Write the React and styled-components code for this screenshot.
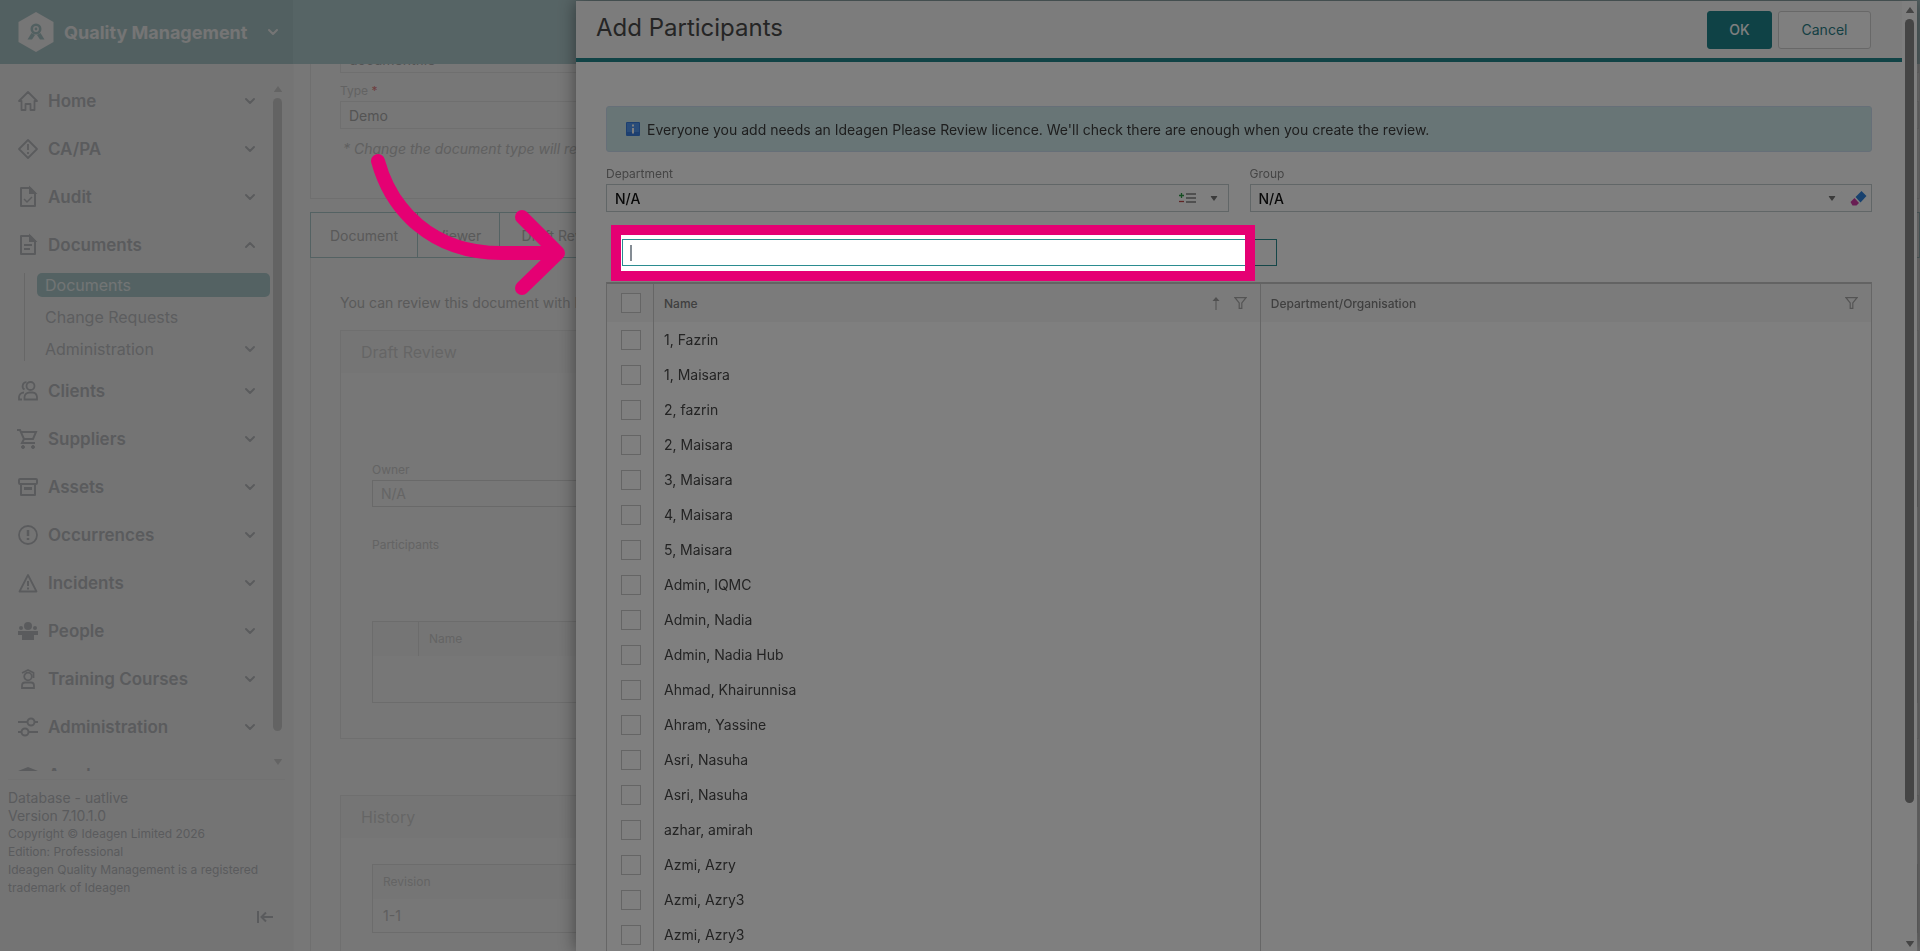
import React from 'react';
import styled, { createGlobalStyle, css } from 'styled-components';
import { ChevronDown, ChevronUp } from 'lucide-react';

const Global = createGlobalStyle`
  * { box-sizing: border-box; }
  html, body, #root { height: 100%; margin: 0; }
  body { overflow: hidden; font-family: Inter, "Liberation Sans", sans-serif; font-size: 14px; color: #444; background: #eeeeee; }
  button, input, select { font-family: inherit; }
  h1, h2, p, ul { margin: 0; padding: 0; font-weight: 400; }
`;

/* ---------- shell ---------- */
const Shell = styled.div`
  display: grid;
  grid-template-columns: 293px 1fr;
  grid-template-rows: 64px 1fr;
  height: 100vh;
`;
const Brand = styled.header`
  display: flex;
  align-items: center;
  gap: 10px;
  padding: 0 12px 0 18px;
  background: #a5c1c2;
  color: #eaeaea;
`;
const BrandName = styled.span`
  flex: 1;
  font-size: 18px;
  font-weight: 700;
  white-space: nowrap;
`;
const TopBar = styled.div`
  background: #adc8ca;
`;
const Sidebar = styled.aside`
  display: flex;
  flex-direction: column;
  min-height: 0;
  padding-right: 8px;
  background: #e9e9e9;
  color: #b5b7bb;
`;
const NavArea = styled.nav`
  flex: 1;
  min-height: 0;
  display: flex;
  margin-bottom: 8px;
`;
const NavList = styled.ul`
  flex: 1;
  overflow: hidden;
  padding-top: 13px;
  list-style: none;
`;
const NavButton = styled.button`
  display: flex;
  align-items: center;
  gap: 10px;
  width: 100%;
  height: 48px;
  padding: 0 12px 0 18px;
  border: 0;
  background: none;
  color: inherit;
  font-size: 17px;
  font-weight: 600;
  text-align: left;
  span { flex: 1; }
`;
const SubList = styled.ul`
  display: flex;
  flex-direction: column;
  gap: 8px;
  margin: 4px 0 6px 24px;
  padding-left: 12px;
  border-left: 1px solid #cfcfcf;
  list-style: none;
`;
const SubLink = styled.a`
  display: flex;
  align-items: center;
  justify-content: space-between;
  height: 24px;
  padding: 0 12px 0 8px;
  border-radius: 5px;
  font-size: 16px;
  text-decoration: none;
  color: ${(p) => (p.$active ? '#e4eaea' : '#b9bbbe')};
  background: ${(p) => (p.$active ? '#a9c5c7' : 'none')};
`;
const About = styled.footer`
  margin-left: 8px;
  padding: 9px 0 0;
  border-top: 1px solid #e2e2e2;
  line-height: 18px;
  font-size: 12px;
  height: 172px;
  display: flex;
  flex-direction: column;
`;
const AboutStrong = styled.p`
  font-size: 14px;
`;
const Collapse = styled.button`
  align-self: flex-end;
  margin: 11px 11px 0 0;
  padding: 0;
  height: 20px;
  border: 0;
  background: none;
  color: inherit;
`;
const ScrollTrack = styled.div`
  display: flex;
  flex-direction: column;
  align-items: center;
  width: 15px;
  padding: ${(p) => p.$pad};
`;
const Thumb = styled.div`
  width: 9px;
  flex: ${(p) => p.$share} 1 0;
  border-radius: 5px;
  margin-top: 6px;
  background: ${(p) => p.$color};
`;
const TrackRest = styled.div`
  flex: ${(p) => p.$share} 1 0;
`;

/* ---------- document page ---------- */
const Page = styled.main`
  min-width: 0;
  min-height: 0;
  overflow: hidden;
  padding-left: 16px;
  color: #bdbdbd;
  border-left: 1px solid #ebebeb;
`;
const Panel = styled.section`
  display: flow-root;
  border: 1px solid #dfdfdf;
  border-top: 0;
  padding-left: 29px;
  height: ${(p) => p.$h};
`;
const ScrolledField = styled.div`
  margin: -19px 0 8px;
`;
const PageField = styled.input`
  display: block;
  width: 100%;
  height: ${(p) => p.$h || '28px'};
  padding: 0 8px;
  border: 1px solid ${(p) => p.$line || '#dedede'};
  background: none;
  font-size: 14px;
  color: ${(p) => p.$ink || '#a9a9a9'};
`;
const PageLabel = styled.label`
  display: block;
  height: 20px;
  line-height: 20px;
  font-size: 12px;
  color: ${(p) => p.$ink || '#c6c6c6'};
  i { color: #dd8080; font-style: normal; }
`;
const Hint = styled.p`
  padding-left: 3px;
  margin-top: 10px;
  line-height: 20px;
  font-style: italic;
  white-space: nowrap;
  color: #c0c0c0;
`;
const Tabs = styled.div`
  display: flex;
  height: 46px;
  margin-top: 13px;
  border: 1px solid #a9c5c7;
`;
const Tab = styled.button`
  padding: 0 16px;
  min-width: ${(p) => p.$w};
  border: 0;
  border-right: 1px solid #a9c5c7;
  background: none;
  font-size: 14px;
  color: #b3b3b3;
  white-space: nowrap;
`;
const Intro = styled.p`
  padding: 35px 0 17px;
  line-height: 20px;
  color: #b5b5b5;
  white-space: nowrap;
`;
const Card = styled.section`
  border: 1px solid #dfdfdf;
  height: ${(p) => p.$h};
  margin-bottom: 56px;
`;
const CardTitle = styled.h2`
  height: 42px;
  line-height: 42px;
  padding-left: 20px;
  font-size: 16px;
  background: #ebebeb;
  color: #cbcbcb;
`;
const CardBody = styled.div`
  padding: ${(p) => p.$top} 0 0 31px;
`;
const MiniTable = styled.table`
  width: 100%;
  border: 1px solid #d9d9d9;
  border-collapse: collapse;
  font-size: 12px;
  text-align: left;
  th { height: 34px; font-weight: 400; padding: 0 10px; background: #ebebeb; color: #c8c8c8; }
  th + th { border-left: 1px solid #d9d9d9; }
  td { padding: 0 10px; font-size: 14px; }
`;
const HeadCell = styled.th`
  width: ${(p) => p.$w};
`;
const BodyCell = styled.td`
  height: ${(p) => p.$h};
`;

/* ---------- drawer ---------- */
const Drawer = styled.div`
  position: fixed;
  top: 1px;
  bottom: 0;
  left: 30%;
  right: 3px;
  display: flex;
  background: #fff;
  box-shadow: 0 0 16px rgba(0, 0, 0, 0.45);
`;
const DrawerMain = styled.div`
  flex: 1;
  min-width: 0;
  display: flex;
  flex-direction: column;
`;
const DrawerHead = styled.header`
  display: flex;
  align-items: center;
  gap: 6px;
  height: 61px;
  flex: none;
  padding: 0 31px 0 20px;
  background: #f8f8f8;
  border-bottom: 4px solid #22868c;
`;
const Title = styled.h1`
  flex: 1;
  padding-bottom: 4px;
  font-size: 24px;
  color: #4b4b4b;
  line-height: 34px;
`;
const Action = styled.button`
  height: 38px;
  width: ${(p) => (p.$primary ? '65px' : '93px')};
  border-radius: 3px;
  font-size: 14px;
  ${(p) =>
    p.$primary
      ? css`background: #1f858c; border: 1px solid #1f858c; color: #fff; font-weight: 500;`
      : css`background: #fff; border: 1px solid #d0d0d0; color: #2b8087;`}
`;
const DrawerBody = styled.div`
  flex: 1;
  min-height: 0;
  display: flex;
  flex-direction: column;
  padding: 44px 30px 0;
`;
const Notice = styled.div`
  display: flex;
  align-items: center;
  gap: 7px;
  height: 46px;
  flex: none;
  padding: 0 19px;
  border: 1px solid #ccdff0;
  border-radius: 3px;
  background: #d0ebed;
  color: #3c3c3c;
`;
const Filters = styled.div`
  display: grid;
  grid-template-columns: 1fr 1fr;
  gap: 21px;
  margin-top: 12px;
`;
const FilterLabel = styled.label`
  display: block;
  height: 20px;
  line-height: 20px;
  font-size: 12px;
  color: #8a8a8a;
`;
const SelectBox = styled.div`
  display: flex;
  align-items: center;
  gap: 14px;
  height: 28px;
  padding: 0 ${(p) => p.$end} 0 8px;
  border: 1px solid #c3cccf;
`;
const Select = styled.select`
  flex: 1;
  appearance: none;
  border: 0;
  background: none;
  padding: 0;
  font-size: 14px;
  font-weight: 500;
  color: #111;
`;
const Search = styled.div`
  position: relative;
  flex: none;
  width: 53%;
  margin: 27px 0 16px;
  padding-left: 16px;
`;
const SearchInput = styled.input`
  display: block;
  width: 100%;
  height: 27px;
  padding: 0 8px;
  border: 1px solid #2b8c90;
  background: #fff;
  font-size: 14px;
  outline: none;
`;
const Spotlight = styled.div`
  position: absolute;
  z-index: 3;
  top: -14px;
  left: 5px;
  right: 22px;
  height: 56px;
  border: 10px solid #e50073;
  box-shadow: 0 0 0 3000px rgba(0, 0, 0, 0.5);
  pointer-events: none;
`;
const Caret = styled.span`
  position: absolute;
  left: 24px;
  top: 6px;
  width: 2px;
  height: 16px;
  background: #848c94;
`;
const Arrow = styled.svg`
  position: absolute;
  z-index: 4;
  left: -235px;
  top: -85px;
  overflow: visible;
  pointer-events: none;
`;
const GridWrap = styled.div`
  flex: 1;
  min-height: 0;
  overflow: hidden;
`;
const Grid = styled.table`
  width: 100%;
  table-layout: fixed;
  border-collapse: separate;
  border-spacing: 0;
  border: 1px solid #cdcdcd;
  border-top: 2px solid #c6c6c6;
  th, td { padding: 0; text-align: left; }
  th + th, td + td { border-left: 1px solid #cdcdcd; padding: 0 13px 0 10px; }
`;
const GridHead = styled.th`
  height: 38px;
  width: ${(p) => p.$w};
  background: #f6f6f6;
  font-size: 12px;
  font-weight: 500;
  color: #808080;
`;
const HeadInner = styled.div`
  display: flex;
  align-items: center;
  gap: 14px;
  span { flex: 1; }
`;
const PersonCell = styled.td`
  height: 35px;
  color: #484848;
`;
const Check = styled.input`
  display: block;
  appearance: none;
  width: 20px;
  height: 20px;
  margin: 0 0 0 14px;
  border: 1px solid #cacaca;
  background: #fff;
`;

/* ---------- icons ---------- */
const Svg = ({ children, size = 20, ...rest }) => (
  <svg width={size} height={size} viewBox="0 0 20 20" fill="none" stroke="currentColor" strokeWidth="2" overflow="visible" {...rest}>
    {children}
  </svg>
);
const icons = {
  home: <Svg strokeWidth="1.800"><path d="M1 10 10 1l9 9h-2.500v9h-4v-6h-5v6h-4v-9z" strokeLinejoin="round" /></Svg>,
  capa: <Svg strokeWidth="1.800"><path d="M10 1 19 10 10 19 1 10z" strokeLinejoin="round" /><path d="M10 5v6M10 13v2" /></Svg>,
  audit: <Svg><path d="M3 1h9l5 5v13H3z" strokeLinejoin="round" /><path d="M12 1v5h5z" fill="currentColor" /><path d="m6 12 3 3 5-5" strokeWidth="1.500" /></Svg>,
  docs: <Svg><path d="M3 1h9l5 5v13H3z" strokeLinejoin="round" /><path d="M12 1v5h5z" fill="currentColor" /><path d="M6 10h8M6 14h6" /></Svg>,
  clients: <Svg strokeWidth="1.800"><circle cx="12.500" cy="5" r="4" /><path d="M8.500 1.200a4 4 0 0 0-2 7.400M6.500 18.500v-2.500a5 5 0 0 1 5-4.500h3a5 5 0 0 1 4.500 4.500v2.500zM6 11.500a5 5 0 0 0-5 4.500v2.500h3" /></Svg>,
  cart: <Svg><path d="M-1 1h3l4 9-2 4h13M3 3h15l-3 7H6" /><circle cx="5" cy="18" r="1.500" fill="currentColor" strokeWidth="1" /><circle cx="15" cy="18" r="1.500" fill="currentColor" strokeWidth="1" /></Svg>,
  assets: <Svg><rect x="1" y="2" width="18" height="5" rx="1" /><path d="M3 7v11h14V7" strokeLinejoin="round" /><path d="M6 11.500h8" strokeWidth="3" /></Svg>,
  occur: <Svg strokeWidth="1.800"><circle cx="10" cy="10" r="9" /><path d="M10 5v6M10 13v2" strokeWidth="2.500" /></Svg>,
  incident: <Svg><path d="M10 2 18.500 18.500H1.500z" strokeWidth="1.800" strokeLinejoin="round" /><path d="M10 8v5M10 14.500v2" /></Svg>,
  people: <Svg stroke="none" fill="currentColor"><circle cx="10" cy="5" r="4" /><circle cx="3" cy="7" r="2" /><circle cx="17" cy="7" r="2" /><path d="M0 10h20v4h-4v5H4v-5H0z" /></Svg>,
  training: <Svg strokeWidth="1.800"><path d="M4 4 10 1l6 3M15.500 3.500V9" /><circle cx="10" cy="7.500" r="3.800" /><path d="M4 19v-2.500a3 3 0 0 1 3-3h6a3 3 0 0 1 3 3V19z" /></Svg>,
  admin: <Svg><path d="M0 5h9M17 5h3M0 15h3M11 15h9" /><circle cx="13" cy="5" r="3.500" /><circle cx="7" cy="15" r="3.500" /></Svg>,
  cap: <Svg stroke="none" fill="currentColor"><path d="M10 2 20 6l-10 4L0 6z" /><path d="M4 9v5q6 4 12 0V9l-6 3z" /></Svg>,
};
const Logo = () => (
  <svg width="36" height="40" viewBox="0 0 36 40">
    <path d="M18 0 35.500 10v20L18 40 .5 30V10z" fill="#ececec" />
    <circle cx="18" cy="17" r="4.200" fill="none" stroke="#a5c1c2" strokeWidth="2.600" />
    <circle cx="18" cy="17" r="1.400" fill="#a5c1c2" />
    <path d="m13.500 21-4 6.500h4.500l3-4.500zM22.500 21l4 6.500H22L19 23z" fill="#a5c1c2" />
  </svg>
);
const Tri = ({ up, color, w = 8, h = 6 }) => (
  <svg width={w} height={h} viewBox="0 0 8 6" fill={color}>
    <path d={up ? 'M4 0 8 5.500Q8 6 7.500 6h-7Q0 6 0 5.500z' : 'M4 6 8 .5Q8 0 7.500 0h-7Q0 0 0 .5z'} />
  </svg>
);
const SortUp = () => (
  <svg width="8" height="13" viewBox="0 0 8 13" fill="#a0a0a0">
    <path d="M4 0 7.500 4h-3v9h-1V4H.5z" />
  </svg>
);
const Funnel = () => (
  <svg width="13" height="12" viewBox="0 0 13 12" fill="none" stroke="#a8a8a8" strokeWidth="1.200">
    <path d="M1 .7h11L7.800 6v5.300H5.200V6z" />
  </svg>
);
const Info = () => (
  <svg width="14" height="14" viewBox="0 0 14 14">
    <rect width="14" height="14" rx="1" fill="#3a7fe0" />
    <rect x="1" y="1" width="12" height="9" fill="#5299f2" />
    <path d="M7 2.500v2M7 6v5.500" stroke="#fff" strokeWidth="2" />
  </svg>
);
const ListIcon = () => (
  <svg width="17" height="12" viewBox="0 0 17 12" strokeWidth="2" fill="none">
    <path d="M7 2h10M7 6h10M7 10h10" stroke="#a0a0a0" />
    <path d="M0 3.500h5M2.500 1v5" stroke="#2b9a45" strokeWidth="1.300" />
    <path d="M0 9.500h5" stroke="#c04a4a" strokeWidth="1.300" />
  </svg>
);
const Eraser = () => (
  <svg width="17" height="15" viewBox="0 0 17 15">
    <path d="m11.500 0 5 5-6 6.500-5-5.500z" fill="#3183dc" />
    <path d="m4.500 7 4.500 5-2.500 2.500h-4L.5 11z" fill="#d23ba6" />
  </svg>
);

const Chevron = ({ up, color }) =>
  up ? <ChevronUp size={16} strokeWidth={3} color={color} /> : <ChevronDown size={16} strokeWidth={3} color={color} />;

const NavItem = ({ icon, label, open, children }) => (
  <li>
    <NavButton aria-expanded={!!open}>
      {icons[icon]}
      <span>{label}</span>
      <Chevron up={open} />
    </NavButton>
    {children}
  </li>
);

const people = [
  '1, Fazrin', '1, Maisara', '2, fazrin', '2, Maisara', '3, Maisara', '4, Maisara', '5, Maisara',
  'Admin, IQMC', 'Admin, Nadia', 'Admin, Nadia Hub', 'Ahmad, Khairunnisa', 'Ahram, Yassine',
  'Asri, Nasuha', 'Asri, Nasuha', 'azhar, amirah', 'Azmi, Azry', 'Azmi, Azry3', 'Azmi, Azry3',
];

export default function App() {
  return (
    <>
      <Global />
      <Shell>
        <Brand>
          <Logo />
          <BrandName>Quality Management</BrandName>
          <Chevron />
        </Brand>
        <TopBar />
        <Sidebar>
          <NavArea>
            <NavList>
              <NavItem icon="home" label="Home" />
              <NavItem icon="capa" label="CA/PA" />
              <NavItem icon="audit" label="Audit" />
              <NavItem icon="docs" label="Documents" open>
                <SubList>
                  <li><SubLink href="#documents" $active>Documents</SubLink></li>
                  <li><SubLink href="#changes">Change Requests</SubLink></li>
                  <li><SubLink href="#administration">Administration <Chevron /></SubLink></li>
                </SubList>
              </NavItem>
              <NavItem icon="clients" label="Clients" />
              <NavItem icon="cart" label="Suppliers" />
              <NavItem icon="assets" label="Assets" />
              <NavItem icon="occur" label="Occurrences" />
              <NavItem icon="incident" label="Incidents" />
              <NavItem icon="people" label="People" />
              <NavItem icon="training" label="Training Courses" />
              <NavItem icon="admin" label="Administration" />
              <NavItem icon="cap" label="Academy" />
            </NavList>
            <ScrollTrack $pad="22px 0 6px">
              <Tri up color="#c9c9c9" />
              <Thumb $share={633} $color="#c7c7c7" />
              <TrackRest $share={28} />
              <Tri color="#c9c9c9" />
            </ScrollTrack>
          </NavArea>
          <About>
            <AboutStrong>Database - uatlive</AboutStrong>
            <AboutStrong>Version 7.10.1.0</AboutStrong>
            <p>Copyright © Ideagen Limited 2026</p>
            <p>Edition: Professional</p>
            <p>Ideagen Quality Management is a registered trademark of Ideagen</p>
            <Collapse aria-label="Collapse menu">
              <svg width="18" height="14" viewBox="0 0 18 14" fill="none" stroke="currentColor" strokeWidth="2">
                <path d="M2 1v12M17 7H6M10 2.500 5.500 7l4.500 4.500" />
              </svg>
            </Collapse>
          </About>
        </Sidebar>
        <Page>
          <Panel $h="135px">
            <ScrolledField>
              <PageField aria-label="Name" defaultValue="documentfile" />
            </ScrolledField>
            <PageLabel htmlFor="type">
              Type <i>*</i>
            </PageLabel>
            <PageField id="type" defaultValue="Demo" />
            <Hint>* Change the document type will rep</Hint>
          </Panel>
          <Tabs>
            <Tab $w="107px">Document</Tab>
            <Tab $w="82px">Viewer</Tab>
            <Tab $w="128px">Draft Review</Tab>
          </Tabs>
          <Panel $h="900px">
            <Intro>You can review this document with lo</Intro>
            <Card $h="409px">
              <CardTitle>Draft Review</CardTitle>
              <CardBody $top="87px">
                <PageLabel htmlFor="owner" $ink="#c8c8c8">Owner</PageLabel>
                <PageField id="owner" $h="27px" $line="#d2d2d2" $ink="#cbcbcb" defaultValue="N/A" />
              </CardBody>
              <CardBody $top="28px">
                <PageLabel as="p" $ink="#c8c8c8">Participants</PageLabel>
              </CardBody>
              <CardBody $top="66px">
                <MiniTable>
                  <thead><tr><HeadCell $w="46px" /><th>Name</th></tr></thead>
                  <tbody><tr><BodyCell $h="47px" colSpan={2} /></tr></tbody>
                </MiniTable>
              </CardBody>
            </Card>
            <Card $h="300px">
              <CardTitle>History</CardTitle>
              <CardBody $top="26px">
                <MiniTable>
                  <thead><tr><th>Revision</th></tr></thead>
                  <tbody><tr><BodyCell $h="34px">1-1</BodyCell></tr></tbody>
                </MiniTable>
              </CardBody>
            </Card>
          </Panel>
        </Page>
      </Shell>

      <Drawer role="dialog" aria-labelledby="drawer-title">
        <DrawerMain>
          <DrawerHead>
            <Title id="drawer-title">Add Participants</Title>
            <Action $primary>OK</Action>
            <Action>Cancel</Action>
          </DrawerHead>
          <DrawerBody>
            <Notice>
              <Info />
              <span>Everyone you add needs an Ideagen Please Review licence. We'll check there are enough when you create the review.</span>
            </Notice>
            <Filters>
              <div>
                <FilterLabel htmlFor="department">Department</FilterLabel>
                <SelectBox $end="10px">
                  <Select id="department"><option>N/A</option></Select>
                  <ListIcon />
                  <Tri color="#777" w={8} h={5} />
                </SelectBox>
              </div>
              <div>
                <FilterLabel htmlFor="group">Group</FilterLabel>
                <SelectBox $end="4px">
                  <Select id="group"><option>N/A</option></Select>
                  <Tri color="#777" w={8} h={5} />
                  <Eraser />
                </SelectBox>
              </div>
            </Filters>
            <Search>
              <SearchInput aria-label="Search participants" />
              <Caret />
              <Spotlight />
              <Arrow width="196" height="142" viewBox="0 0 196 142" fill="none" stroke="#e50073" strokeWidth="14" strokeLinecap="round" strokeLinejoin="round">
                <path d="M7 7C20 55 60 99 130 99h56M151 63l36 36-36 35" />
              </Arrow>
            </Search>
            <GridWrap>
              <Grid>
                <thead>
                  <tr>
                    <GridHead $w="46px"><Check type="checkbox" aria-label="Select all" /></GridHead>
                    <GridHead $w="48%"><HeadInner><span>Name</span><SortUp /><Funnel /></HeadInner></GridHead>
                    <GridHead><HeadInner><span>Department/Organisation</span><Funnel /></HeadInner></GridHead>
                  </tr>
                </thead>
                <tbody>
                  {people.map((name, i) => (
                    <tr key={i}>
                      <PersonCell><Check type="checkbox" aria-label={name} /></PersonCell>
                      <PersonCell>{name}</PersonCell>
                      <PersonCell />
                    </tr>
                  ))}
                </tbody>
              </Grid>
            </GridWrap>
          </DrawerBody>
        </DrawerMain>
        <ScrollTrack $pad="6px 0 4px">
          <Tri up color="#8a8a8a" />
          <Thumb $share={784} $color="#8a8a8a" />
          <TrackRest $share={138} />
          <Tri color="#8a8a8a" />
        </ScrollTrack>
      </Drawer>
    </>
  );
}
